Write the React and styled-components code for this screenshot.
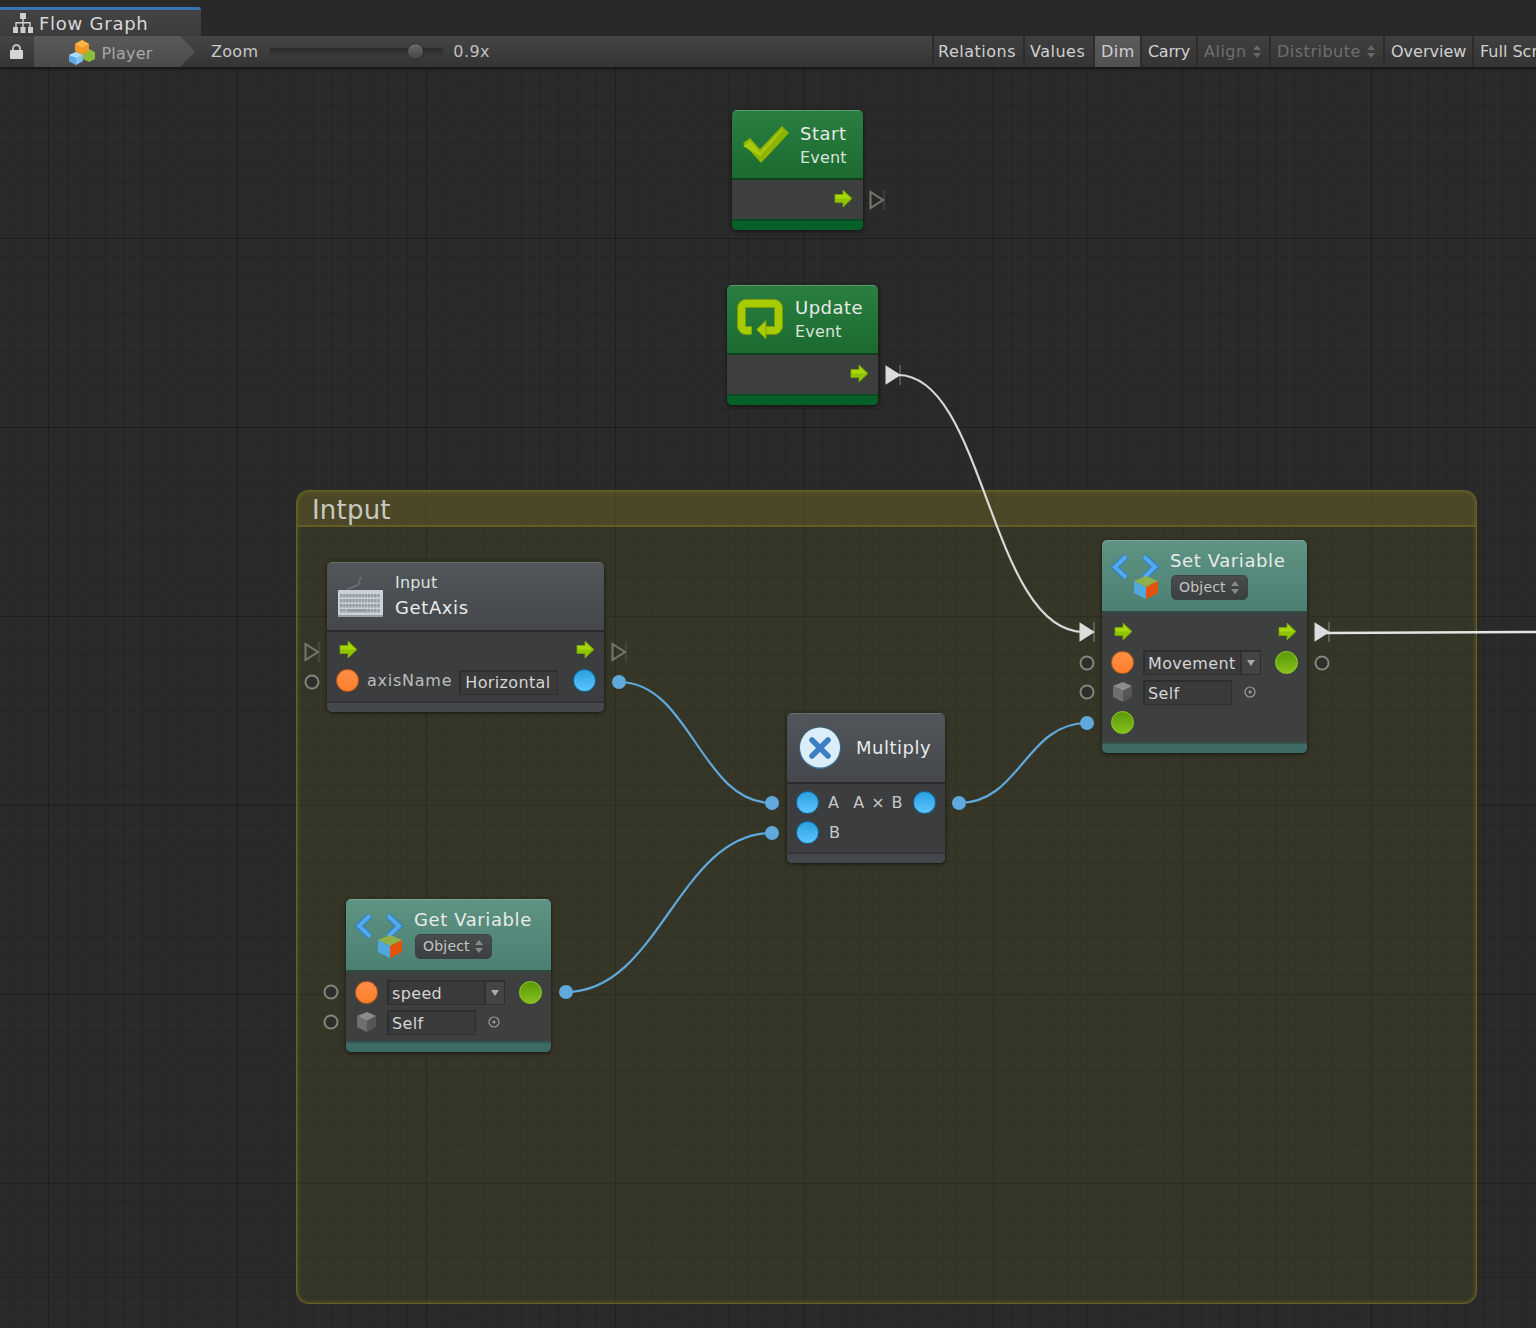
import styled, { createGlobalStyle } from 'styled-components';

const CANVAS_TOP = 67;
const FONT = '"DejaVu Sans", Verdana, sans-serif';

const Global = createGlobalStyle`
    html, body {
        margin: 0;
        padding: 0;
        background: #282828;
        font-family: ${FONT};
        overflow: hidden;
    }
`;

const TONES = {
    green: { top: '#2a7f40', bottom: '#1b6a30', edge: '#5f9a70', line: '#0f3f1c', foot: '#05602a', footLine: '#0a4a20', body: '#3c3f3e' },
    teal: { top: '#5f9484', bottom: '#4a7f72', edge: '#7aa797', line: '#2f4a45', foot: '#3e6a65', footLine: '#335250', body: '#3e4040' },
    grey: { top: '#52565b', bottom: '#44474b', edge: '#6a6d70', line: '#2a2c2e', foot: '#45484b', footLine: '#323436', body: '#3c3d3e' },
};

const Page = styled.div`
    width: 1536px;
    height: 1328px;
    display: flex;
    flex-direction: column;
    overflow: hidden;
    position: relative;
`;

const TabStrip = styled.div`
    height: 36px;
    padding-top: 7px;
    box-sizing: border-box;
    background: #292929;
    display: flex;
`;

const Tab = styled.div`
    width: 201px;
    height: 29px;
    box-sizing: border-box;
    border-top: 3px solid #3a72b8;
    border-top-right-radius: 3px;
    background: linear-gradient(#434343, #3c3c3c);
    display: flex;
    align-items: center;
    gap: 6px;
    padding-left: 13px;
    color: #d8d8d8;
    font-size: 18px;
    letter-spacing: 0.75px;
`;

const Toolbar = styled.div`
    height: 31px;
    display: flex;
    align-items: stretch;
    background: linear-gradient(#454545, #343434);
    box-shadow: 0 2px 3px rgba(0, 0, 0, 0.45);
    position: relative;
    z-index: 3;
    overflow: hidden;
`;

const ToolLeft = styled.div`
    width: 932px;
    flex: none;
    display: flex;
    align-items: center;
`;

const LockCell = styled.div`
    width: 34px;
    flex: none;
    display: flex;
    padding-left: 10px;
    box-sizing: border-box;
`;

const Crumb = styled.div`
    width: 161px;
    height: 31px;
    flex: none;
    display: flex;
    align-items: center;
    justify-content: center;
    gap: 7px;
    padding-right: 8px;
    box-sizing: border-box;
    background: linear-gradient(#5a5a5a, #4a4a4a);
    clip-path: polygon(0 0, 146px 0, 161px 50%, 146px 100%, 0 100%);
    color: #a8a8a8;
    font-size: 16px;
    letter-spacing: 0.2px;
`;

const CrumbLabel = styled.span`
    margin-top: 4px;
`;

const ZoomLabel = styled.span`
    margin-left: 16px;
    color: #c8c8c8;
    font-size: 16px;
    letter-spacing: 0.3px;
`;

const Track = styled.div`
    width: 175px;
    height: 8px;
    margin-left: 11px;
    border-radius: 4px;
    background: linear-gradient(#2a2a2a, #3a3a3a);
    position: relative;
`;

const Thumb = styled.div`
    width: 17px;
    height: 17px;
    border-radius: 50%;
    background: linear-gradient(#6a6a6a, #444);
    border: 1px solid #2c2c2c;
    box-sizing: border-box;
    position: absolute;
    top: -5px;
    left: ${(p) => p.$left}px;
`;

const ZoomValue = styled.span`
    margin-left: 9px;
    color: #c0c0c0;
    font-size: 16px;
    letter-spacing: 0.4px;
`;

const ToolButton = styled.div`
    width: ${(p) => p.$w}px;
    flex: none;
    box-sizing: border-box;
    display: flex;
    align-items: center;
    gap: 6px;
    padding-left: ${(p) => p.$pad ?? 6}px;
    white-space: nowrap;
    font-size: 16px;
    letter-spacing: ${(p) => p.$ls ?? 0.5}px;
    color: ${(p) => (p.$muted ? '#6f6f6f' : '#d0d0d0')};
    border-left: 2px solid #2c2c2c;
    background: ${(p) => (p.$active ? 'linear-gradient(#5c5c5c, #505050)' : 'linear-gradient(#3f3f3f, #343434)')};
`;

const Canvas = styled.div`
    flex: 1;
    position: relative;
    background-color: #2a2a2a;
    background-image:
        linear-gradient(90deg, rgba(0, 0, 0, 0.2) 1px, transparent 1px),
        linear-gradient(rgba(0, 0, 0, 0.2) 1px, transparent 1px),
        linear-gradient(90deg, rgba(0, 0, 0, 0.12) 1px, transparent 1px),
        linear-gradient(rgba(0, 0, 0, 0.12) 1px, transparent 1px);
    background-size: 189px 189px, 189px 189px, 18.9px 18.9px, 18.9px 18.9px;
    background-position: 48px -18px, 48px -18px, 48px -18px, 48px -18px;
`;

const Group = styled.div`
    position: absolute;
    left: 296px;
    top: ${490 - CANVAS_TOP}px;
    width: 1181px;
    height: 814px;
    box-sizing: border-box;
    border: 1px solid rgba(122, 116, 36, 0.7);
    border-radius: 13px;
    box-shadow: inset 0 0 3px 1px rgba(122, 116, 36, 0.55);
    background: rgba(92, 92, 36, 0.25);
`;

const GroupTitle = styled.div`
    height: 36px;
    box-sizing: border-box;
    padding: 2px 0 0 15px;
    border-bottom: 2px solid rgba(122, 116, 36, 0.45);
    border-radius: 12px 12px 0 0;
    background: rgba(116, 104, 40, 0.36);
    color: #c8c8c0;
    font-size: 26px;
    line-height: 35px;
    letter-spacing: 0.2px;
`;

const Wires = styled.svg`
    position: absolute;
    left: 0;
    top: 0;
    pointer-events: none;
`;

const Node = styled.div`
    position: absolute;
    left: ${(p) => p.$x}px;
    top: ${(p) => p.$y - CANVAS_TOP}px;
    width: ${(p) => p.$w}px;
    height: ${(p) => p.$h}px;
    display: flex;
    flex-direction: column;
    border-radius: 5px;
    overflow: hidden;
    background: ${(p) => TONES[p.$tone].body};
    box-shadow: 0 1px 4px rgba(0, 0, 0, 0.65);
`;

const NodeHead = styled.div`
    height: ${(p) => p.$h}px;
    flex: none;
    box-sizing: border-box;
    display: flex;
    align-items: center;
    gap: ${(p) => p.$gap}px;
    padding-left: ${(p) => p.$pad}px;
    background: linear-gradient(${(p) => TONES[p.$tone].top}, ${(p) => TONES[p.$tone].bottom});
    border-top: 1px solid ${(p) => TONES[p.$tone].edge};
    border-bottom: 2px solid ${(p) => TONES[p.$tone].line};
`;

const HeadText = styled.div`
    display: flex;
    flex-direction: column;
    gap: ${(p) => p.$gap}px;
    align-items: flex-start;
    padding: ${(p) => p.$pt || 0}px 0 ${(p) => p.$pb || 0}px;
`;

const Title = styled.div`
    color: #e8ebe8;
    font-size: 18px;
    line-height: 22px;
    letter-spacing: ${(p) => p.$ls || 0.5}px;
    white-space: nowrap;
`;

const Sub = styled.div`
    color: #d8e4da;
    font-size: 16px;
    line-height: 20px;
    letter-spacing: 0.2px;
`;

const TypeButton = styled.div`
    width: 77px;
    height: 25px;
    margin-left: 1px;
    box-sizing: border-box;
    display: flex;
    align-items: center;
    gap: 5px;
    padding-left: 7px;
    border-radius: 5px;
    border: 1px solid #3a4442;
    background: linear-gradient(#4a4d4e, #3b3e3f);
    color: #c4c4c4;
    font-size: 14px;
    letter-spacing: 0.2px;
`;

const NodeBody = styled.div`
    flex: 1;
    display: flex;
    flex-direction: column;
    padding: ${(p) => p.$pt}px ${(p) => p.$right ?? p.$side}px 0 ${(p) => p.$side}px;
`;

const Row = styled.div`
    height: ${(p) => p.$h || 30}px;
    display: flex;
    align-items: center;
    gap: ${(p) => p.$gap || 0}px;
    justify-content: ${(p) => p.$justify || 'flex-start'};
`;

const ArrowRow = styled.div`
    height: 30px;
    box-sizing: border-box;
    padding: 0 1px 2px 3px;
    display: flex;
    align-items: center;
    justify-content: space-between;
`;

const NodeFoot = styled.div`
    height: ${(p) => p.$h}px;
    flex: none;
    box-sizing: border-box;
    background: ${(p) => TONES[p.$tone].foot};
    border-top: 2px solid ${(p) => TONES[p.$tone].footLine};
`;

const PORT_COLORS = {
    orange: { from: '#ff8f46', to: '#ff7f2c', rim: '#c65a18' },
    blue: { from: '#2b9fe0', to: '#5cc6ff', rim: '#0d6aa0' },
    lime: { from: '#5a9a08', to: '#86c01c', rim: '#8ed024' },
};

const Port = styled.span`
    width: 23px;
    height: 23px;
    flex: none;
    box-sizing: border-box;
    border-radius: 50%;
    border: 1.5px solid ${(p) => PORT_COLORS[p.$kind].rim};
    background: linear-gradient(${(p) => PORT_COLORS[p.$kind].from}, ${(p) => PORT_COLORS[p.$kind].to});
    margin-left: ${(p) => (p.$end ? 'auto' : '0')};
`;

const FieldLabel = styled.span`
    margin-right: -1px;
    color: #bdbdbd;
    font-size: 16px;
    letter-spacing: 0.75px;
    white-space: nowrap;
`;

const ValueBox = styled.div`
    width: ${(p) => p.$w}px;
    height: 25px;
    flex: none;
    box-sizing: border-box;
    display: flex;
    align-items: center;
    padding-left: ${(p) => p.$pad || 3}px;
    margin-top: ${(p) => p.$drop || 1}px;
    background: #3a3a3a;
    border-style: solid;
    border-color: #2e2e2e;
    border-width: 2px 1px 1px 2px;
    color: #d4d4d4;
    font-size: 16px;
    letter-spacing: 0.35px;
    white-space: nowrap;
`;

const DropCell = styled.span`
    width: 18px;
    height: 100%;
    margin-left: auto;
    display: flex;
    align-items: center;
    justify-content: center;
    background: #444;
    border-left: 2px solid #303030;
`;

const TargetSlot = styled.span`
    display: flex;
    margin-left: ${(p) => p.$shift}px;
`;

const PortText = styled.span`
    flex: none;
    white-space: nowrap;
    margin-left: ${(p) => (p.$wide ? 5 : 0)}px;
    color: #c8c8c8;
    font-size: 16px;
    letter-spacing: ${(p) => (p.$wide ? 0.95 : 0.35)}px;
`;

const Free = styled.div`
    position: absolute;
    left: ${(p) => p.$x}px;
    top: ${(p) => p.$y - CANVAS_TOP}px;
    transform: translate(-50%, -50%);
    display: flex;
`;

const HollowPort = styled.span`
    display: block;
    width: 15px;
    height: 15px;
    box-sizing: border-box;
    border-radius: 50%;
    border: 2px solid #85857c;
    background: #2e2e2a;
`;

const WireDot = styled.span`
    display: block;
    width: 14px;
    height: 14px;
    border-radius: 50%;
    background: #5fa9dc;
`;

function FlowIcon() {
    return (
        <svg width="20" height="20" viewBox="0 0 20 20" fill="#cfcfcf">
            <rect x="7" y="0" width="6" height="6" />
            <rect x="0" y="14" width="5" height="6" />
            <rect x="7.5" y="14" width="5" height="6" />
            <rect x="15" y="14" width="5" height="6" />
            <path d="M9.3 6h1.4v3h7v5h-1.4v-3.6h-5.6V14H9.3v-3.6H3.7V14H2.3V9h7z" />
        </svg>
    );
}

function LockIcon() {
    return (
        <svg width="13" height="15" viewBox="0 0 13 15">
            <path d="M3 7V4.500a3.500 3.500 0 0 1 7 0V7" fill="none" stroke="#bdbdbd" strokeWidth="2" />
            <rect x="0" y="6" width="13" height="9" rx="1" fill="#d4d4d4" />
        </svg>
    );
}

function PlayerIcon() {
    return (
        <svg width="26" height="26" viewBox="0 0 26 26">
            <path d="M14 13l6-3 6 3v7l-6 3-6-3z" fill="#8dbb3a" />
            <path d="M0 16l7-3 7 3v6l-7 4-7-4z" fill="#7fc0f0" />
            <path d="M0 16l7 3 7-3-7-3z" fill="#a9dcff" />
            <path d="M7 19v7l-7-4v-6z" fill="#5ea8e6" />
            <path d="M6 5l7-4 7 4v7l-7 4-7-4z" fill="#f09a26" />
            <path d="M6 5l7 3.500L20 5l-7-4z" fill="#ffb648" />
        </svg>
    );
}

function UpDown({ color = '#8a8a8a' }) {
    return (
        <svg width="8" height="13" viewBox="0 0 8 13" fill={color}>
            <path d="M4 0l4 5H0zM4 13l4-5H0z" />
        </svg>
    );
}

function FlowArrow() {
    return (
        <svg width="19" height="19" viewBox="0 0 19 19">
            <path d="M1 5.500h8V1l9 8.500L9 18v-4.500H1z" fill="#8fc400" stroke="#7aa800" strokeWidth="0.8" />
            <path d="M1.500 6h8V3l7 6.500H1.500z" fill="#a8d80a" />
        </svg>
    );
}

function CheckIcon() {
    return (
        <svg width="47" height="40" viewBox="0 0 47 40">
            <path d="M1 18l7-5 10 11L40 1l7 7-28 30z" fill="#8fb400" />
            <path d="M1 18l7-5 10 11L40 1l1 1-23 26z" fill="#a8cc0c" transform="translate(0 3)" />
        </svg>
    );
}

function LoopIcon() {
    const ring = 'M14.500 31.500H9A4.500 4.500 0 0 1 4.500 27V9A4.500 4.500 0 0 1 9 4.500H37A4.500 4.500 0 0 1 41.500 9V27A4.500 4.500 0 0 1 37 31.500H28';
    return (
        <svg width="47" height="41" viewBox="0 0 47 41">
            <path d={ring} fill="none" stroke="#7f9c06" strokeWidth="9" />
            <path d={ring} fill="none" stroke="#a6cc00" strokeWidth="7" />
            <path d="M29 21.500V40L19.500 30.500z" fill="#a6cc00" stroke="#7f9c06" strokeWidth="1" />
        </svg>
    );
}

function KeyboardIcon() {
    const keys = [];
    for (let r = 0; r < 4; r += 1) {
        for (let c = 0; c < 13; c += 1) {
            if (r === 3 && c > 1 && c < 9) continue;
            keys.push(<rect key={`${r}-${c}`} x={3 + c * 3.1} y={18 + r * 5} width="2.4" height="3.4" fill="#929ca1" />);
        }
    }
    return (
        <svg width="47" height="42" viewBox="0 0 47 42">
            <path d="M10 15c0-5 12-3 12-8 0-2 1-4 2-6" fill="none" stroke="#6f7478" strokeWidth="1.5" />
            <rect x="1" y="14" width="45" height="27" rx="1" fill="#c8d2d8" />
            <rect x="1" y="39" width="45" height="2" fill="#96a0a6" />
            {keys}
            <rect x="9.500" y="33" width="21" height="3.400" fill="#929ca1" />
        </svg>
    );
}

function CodeIcon() {
    return (
        <svg width="48" height="46" viewBox="0 0 48 46">
            <path d="M15 3.500L4 14l11 10.500" fill="none" stroke="#2f80c4" strokeWidth="6.5" />
            <path d="M15 3.500L4 14l11 10.500" fill="none" stroke="#52aaee" strokeWidth="4" />
            <path d="M33 3.500L44 14 33 24.500" fill="none" stroke="#2f80c4" strokeWidth="6.5" />
            <path d="M33 3.500L44 14 33 24.500" fill="none" stroke="#52aaee" strokeWidth="4" />
            <path d="M23 28l12-5 12 5-12 6z" fill="#8fb04a" />
            <path d="M23 28l12 6v12l-12-6z" fill="#4fa8e0" />
            <path d="M47 28l-12 6v12l12-6z" fill="#e4530e" />
        </svg>
    );
}

function MultiplyIcon() {
    return (
        <svg width="44" height="44" viewBox="0 0 44 44">
            <circle cx="22" cy="22" r="21" fill="#3a6d96" />
            <circle cx="22" cy="21.500" r="20" fill="#dcedfa" />
            <path d="M14 14l16 16M30 14L14 30" stroke="#3b80c4" strokeWidth="5.5" strokeLinecap="round" />
        </svg>
    );
}

function GreyCube() {
    return (
        <svg width="23" height="22" viewBox="0 0 23 22">
            <path d="M2 5l10-4 9 4-9 5z" fill="#8c8c8c" />
            <path d="M2 5l10 5v11L2 16z" fill="#6e6e6e" />
            <path d="M21 5l-9 5v11l9-5z" fill="#565656" />
        </svg>
    );
}

function TargetIcon() {
    return (
        <svg width="12" height="12" viewBox="0 0 12 12">
            <circle cx="6" cy="6" r="5" fill="none" stroke="#9a9a9a" strokeWidth="1.2" />
            <circle cx="6" cy="6" r="1.5" fill="#9a9a9a" />
        </svg>
    );
}

function DropArrow() {
    return (
        <svg width="8" height="6" viewBox="0 0 8 6">
            <path d="M0 0h8L4 6z" fill="#aaa" />
        </svg>
    );
}

function FlowMark({ on }) {
    const color = on ? '#dcdcdc' : 'none';
    const stroke = on ? '#dcdcdc' : '#77776f';
    return (
        <svg width="16" height="20" viewBox="0 0 16 20">
            <path d="M1.500 2v16L14 10z" fill={color} stroke={stroke} strokeWidth="2" />
            <path d="M15 0v20" stroke={stroke} strokeWidth="0.7" opacity="0.7" />
        </svg>
    );
}

const WIRES = [
    { d: 'M898 375C985 375 990 632 1084 632', color: '#d8d8d8', w: 2.2 },
    { d: 'M1326 633C1400 633 1470 632 1536 632', color: '#e4e4e4', w: 2.6 },
    { d: 'M619 682C690 682 701 803 772 803', color: '#5fa9dc', w: 2.2 },
    { d: 'M959 803C1020 803 1026 723 1087 723', color: '#5fa9dc', w: 2.2 },
    { d: 'M566 992C660 992 678 833 772 833', color: '#5fa9dc', w: 2.2 },
];

const HOLLOW = [[312, 682], [1087, 663], [1087, 692], [1322, 663], [331, 992], [331, 1022]];
const DOTS = [[619, 682], [772, 803], [772, 833], [959, 803], [1087, 723], [566, 992]];
const MARKS = [
    [877, 200, false],
    [893, 375, true],
    [312, 652, false],
    [619, 652, false],
    [1087, 632, true],
    [1322, 632, true],
];

function VariableNode({ x, y, title, h, foot, pt, children }) {
    return (
        <Node $x={x} $y={y} $w={205} $h={h} $tone="teal">
            <NodeHead $h={73} $pad={9} $gap={11} $tone="teal">
                <CodeIcon />
                <HeadText $gap={3} $pb={3}>
                    <Title $ls={0.6}>{title}</Title>
                    <TypeButton>
                        Object
                        <UpDown />
                    </TypeButton>
                </HeadText>
            </NodeHead>
            <NodeBody $pt={pt} $side={9}>{children}</NodeBody>
            <NodeFoot $h={foot} $tone="teal" />
        </Node>
    );
}

function VarRows({ name, shift }) {
    return (
        <>
            <Row $gap={9}>
                <Port $kind="orange" />
                <ValueBox $w={118}>
                    {name}
                    <DropCell>
                        <DropArrow />
                    </DropCell>
                </ValueBox>
                <Port $kind="lime" $end />
            </Row>
            <Row $gap={9}>
                <GreyCube />
                <ValueBox $w={89}>Self</ValueBox>
                <TargetSlot $shift={shift}>
                    <TargetIcon />
                </TargetSlot>
            </Row>
        </>
    );
}

export default function App() {
    return (
        <Page>
            <Global />
            <TabStrip>
                <Tab>
                    <FlowIcon />
                    Flow Graph
                </Tab>
            </TabStrip>
            <Toolbar>
                <ToolLeft>
                    <LockCell>
                        <LockIcon />
                    </LockCell>
                    <Crumb>
                        <PlayerIcon />
                        <CrumbLabel>Player</CrumbLabel>
                    </Crumb>
                    <ZoomLabel>Zoom</ZoomLabel>
                    <Track>
                        <Thumb $left={138} />
                    </Track>
                    <ZoomValue>0.9x</ZoomValue>
                </ToolLeft>
                <ToolButton $w={91} $pad={4}>Relations</ToolButton>
                <ToolButton $w={70} $pad={5}>Values</ToolButton>
                <ToolButton $w={47} $active>Dim</ToolButton>
                <ToolButton $w={56} $ls={-0.3}>Carry</ToolButton>
                <ToolButton $w={73} $muted>
                    Align
                    <UpDown color="#666" />
                </ToolButton>
                <ToolButton $w={114} $muted>
                    Distribute
                    <UpDown color="#666" />
                </ToolButton>
                <ToolButton $w={89} $ls={0}>Overview</ToolButton>
                <ToolButton $w={100} $ls={0}>Full Screen</ToolButton>
            </Toolbar>
            <Canvas>
                <Group>
                    <GroupTitle>Intput</GroupTitle>
                </Group>

                <Node $x={732} $y={110} $w={131} $h={120} $tone="green">
                    <NodeHead $h={70} $pad={10} $gap={11} $tone="green">
                        <CheckIcon />
                        <HeadText $gap={3} $pt={2}>
                            <Title>Start</Title>
                            <Sub>Event</Sub>
                        </HeadText>
                    </NodeHead>
                    <NodeBody $pt={9} $side={10}>
                        <Row $h={19} $justify="flex-end">
                            <FlowArrow />
                        </Row>
                    </NodeBody>
                    <NodeFoot $h={11} $tone="green" />
                </Node>

                <Node $x={727} $y={285} $w={151} $h={120} $tone="green">
                    <NodeHead $h={70} $pad={10} $gap={11} $tone="green">
                        <LoopIcon />
                        <HeadText $gap={3}>
                            <Title>Update</Title>
                            <Sub>Event</Sub>
                        </HeadText>
                    </NodeHead>
                    <NodeBody $pt={9} $side={9}>
                        <Row $h={19} $justify="flex-end">
                            <FlowArrow />
                        </Row>
                    </NodeBody>
                    <NodeFoot $h={11} $tone="green" />
                </Node>

                <Node $x={327} $y={562} $w={277} $h={150} $tone="grey">
                    <NodeHead $h={70} $pad={10} $gap={11} $tone="grey">
                        <KeyboardIcon />
                        <HeadText $gap={4} $pb={2}>
                            <Sub>Input</Sub>
                            <Title $ls={0.6}>GetAxis</Title>
                        </HeadText>
                    </NodeHead>
                    <NodeBody $pt={3} $side={9} $right={8}>
                        <ArrowRow>
                            <FlowArrow />
                            <FlowArrow />
                        </ArrowRow>
                        <Row $h={31} $gap={8}>
                            <Port $kind="orange" />
                            <FieldLabel>axisName</FieldLabel>
                            <ValueBox $w={99} $pad={4} $drop={3}>Horizontal</ValueBox>
                            <Port $kind="blue" $end />
                        </Row>
                    </NodeBody>
                    <NodeFoot $h={11} $tone="grey" />
                </Node>

                <Node $x={787} $y={713} $w={158} $h={150} $tone="grey">
                    <NodeHead $h={71} $pad={11} $gap={14} $tone="grey">
                        <MultiplyIcon />
                        <Title $ls={0.5}>Multiply</Title>
                    </NodeHead>
                    <NodeBody $pt={3} $side={9}>
                        <Row $gap={9}>
                            <Port $kind="blue" />
                            <PortText>A</PortText>
                            <PortText $wide>A × B</PortText>
                            <Port $kind="blue" $end />
                        </Row>
                        <Row $gap={10}>
                            <Port $kind="blue" />
                            <PortText>B</PortText>
                        </Row>
                    </NodeBody>
                    <NodeFoot $h={11} $tone="grey" />
                </Node>

                <VariableNode x={1102} y={540} title="Set Variable" h={213} foot={11} pt={4}>
                    <ArrowRow>
                        <FlowArrow />
                        <FlowArrow />
                    </ArrowRow>
                    <VarRows name="Movement" shift={3} />
                    <Row>
                        <Port $kind="lime" />
                    </Row>
                </VariableNode>

                <VariableNode x={346} y={899} title="Get Variable" h={153} foot={11} pt={5}>
                    <VarRows name="speed" shift={3} />
                </VariableNode>

                <Wires width="1536" height={1328 - CANVAS_TOP} viewBox={`0 ${CANVAS_TOP} 1536 ${1328 - CANVAS_TOP}`}>
                    {WIRES.map((w) => (
                        <path key={w.d} d={w.d} fill="none" stroke={w.color} strokeWidth={w.w} />
                    ))}
                </Wires>

                {HOLLOW.map(([x, y]) => (
                    <Free key={`h${x}-${y}`} $x={x} $y={y}>
                        <HollowPort />
                    </Free>
                ))}
                {DOTS.map(([x, y]) => (
                    <Free key={`d${x}-${y}`} $x={x} $y={y}>
                        <WireDot />
                    </Free>
                ))}
                {MARKS.map(([x, y, on]) => (
                    <Free key={`m${x}-${y}`} $x={x} $y={y}>
                        <FlowMark on={on} />
                    </Free>
                ))}
            </Canvas>
        </Page>
    );
}
